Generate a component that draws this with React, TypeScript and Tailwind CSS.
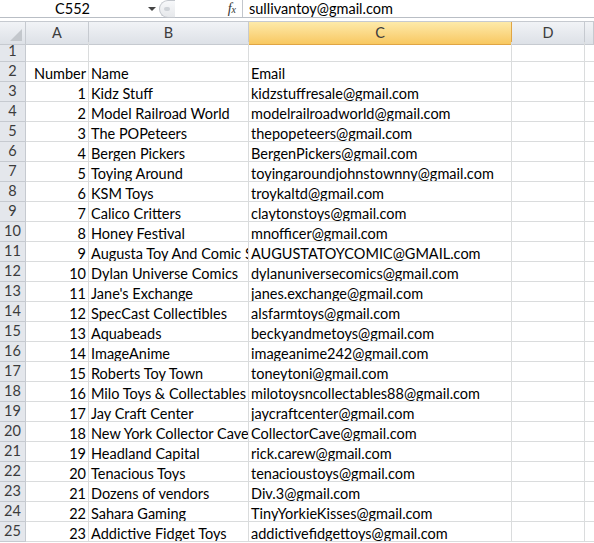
import React from 'react';

const rows: [number, string, string][] = [
  [1, 'Kidz Stuff', 'kidzstuffresale@gmail.com'],
  [2, 'Model Railroad World', 'modelrailroadworld@gmail.com'],
  [3, 'The POPeteers', 'thepopeteers@gmail.com'],
  [4, 'Bergen Pickers', 'BergenPickers@gmail.com'],
  [5, 'Toying Around', 'toyingaroundjohnstownny@gmail.com'],
  [6, 'KSM Toys', 'troykaltd@gmail.com'],
  [7, 'Calico Critters', 'claytonstoys@gmail.com'],
  [8, 'Honey Festival', 'mnofficer@gmail.com'],
  [9, 'Augusta Toy And Comic Shop', 'AUGUSTATOYCOMIC@GMAIL.com'],
  [10, 'Dylan Universe Comics', 'dylanuniversecomics@gmail.com'],
  [11, "Jane's Exchange", 'janes.exchange@gmail.com'],
  [12, 'SpecCast Collectibles', 'alsfarmtoys@gmail.com'],
  [13, 'Aquabeads', 'beckyandmetoys@gmail.com'],
  [14, 'ImageAnime', 'imageanime242@gmail.com'],
  [15, 'Roberts Toy Town', 'toneytoni@gmail.com'],
  [16, 'Milo Toys & Collectables', 'milotoysncollectables88@gmail.com'],
  [17, 'Jay Craft Center', 'jaycraftcenter@gmail.com'],
  [18, 'New York Collector Cave', 'CollectorCave@gmail.com'],
  [19, 'Headland Capital', 'rick.carew@gmail.com'],
  [20, 'Tenacious Toys', 'tenacioustoys@gmail.com'],
  [21, 'Dozens of vendors', 'Div.3@gmail.com'],
  [22, 'Sahara Gaming', 'TinyYorkieKisses@gmail.com'],
  [23, 'Addictive Fidget Toys', 'addictivefidgettoys@gmail.com'],
];

const cols = 'grid grid-cols-[26px_63px_160px_263px_73px_1fr]';
const head = 'flex items-center justify-center border-r border-b border-[#c6cad0] bg-gradient-to-b from-[#f1f3f6] to-[#dde1e7] text-[#3c3c3c]';
const cell = 'border-r border-b border-[#dadcdd] overflow-hidden whitespace-nowrap leading-[19px] pt-[2px]';
const rowHead = 'flex items-end justify-center pb-[1px] border-r border-b border-[#c6cad0] bg-[#e4e7ec] text-[#3c3c3c] leading-[18px]';

function Row({ n, a, b, c }: { n: number; a?: string; b?: string; c?: string }) {
  return (
    <div className={`${cols} h-[20px]`}>
      <div className={rowHead}>{n}</div>
      <div className={`${cell} text-right pr-[2px] pl-[2px]`}>{a}</div>
      <div className={`${cell} pl-[2px]`}>{b}</div>
      <div className={`${cell} pl-[2px]`}>{c}</div>
      <div className={cell}></div>
      <div className="border-b border-[#dadcdd]"></div>
    </div>
  );
}

export default function App() {
  return (
    <div className="w-[594px] h-[543px] overflow-hidden bg-white text-[14.5px] text-black font-['Lato','Liberation_Sans',sans-serif]">
      {/* formula bar */}
      <div className="flex h-[18px] items-center border-b border-[#b9bec5]">
        <div className="w-[145px] text-center leading-[18px]">C552</div>
        <div className="w-[14px] flex justify-center">
          <div className="w-0 h-0 border-l-[4px] border-r-[4px] border-t-[4px] border-l-transparent border-r-transparent border-t-[#444]" />
        </div>
        <div className="w-[16px] h-[18px] rounded-l-full border border-r-0 border-[#c2c6cc] bg-gradient-to-b from-[#f7f8fa] to-[#e6e8eb] flex items-center pl-[4px]">
          <div className="w-[6px] h-[4px] rounded-full bg-[#cfd3d8]" />
        </div>
        <div className="w-[67px] flex justify-end pr-[6px]">
          <span className="italic font-['Liberation_Serif',serif] text-[14px] leading-none text-[#333]">f<span className="text-[10px]">x</span></span>
        </div>
        <div className="h-full border-l border-[#c2c6cc] pl-[6px] leading-[18px]">sullivantoy@gmail.com</div>
      </div>
      <div className="h-[4px] border-b border-[#c6cad0]" />
      {/* column headers */}
      <div className={`${cols} h-[20px]`}>
        <div className={`${head} relative`}>
          <div className="absolute right-[3px] bottom-[3px] w-0 h-0" style={{ borderBottom: '12px solid #c3c7cc', borderLeft: '12px solid transparent' }} />
        </div>
        <div className={head}>A</div>
        <div className={head}>B</div>
        <div className="flex items-center justify-center border-r border-b border-[#e0a544] bg-gradient-to-b from-[#fdeaa9] to-[#f8c860] text-[#3c3c3c]">C</div>
        <div className={head}>D</div>
        <div className={head}></div>
      </div>
      <Row n={1} />
      <Row n={2} a="Number" b="Name" c="Email" />
      {rows.map((r, i) => (
        <Row key={i} n={i + 3} a={String(r[0])} b={r[1]} c={r[2]} />
      ))}
    </div>
  );
}
